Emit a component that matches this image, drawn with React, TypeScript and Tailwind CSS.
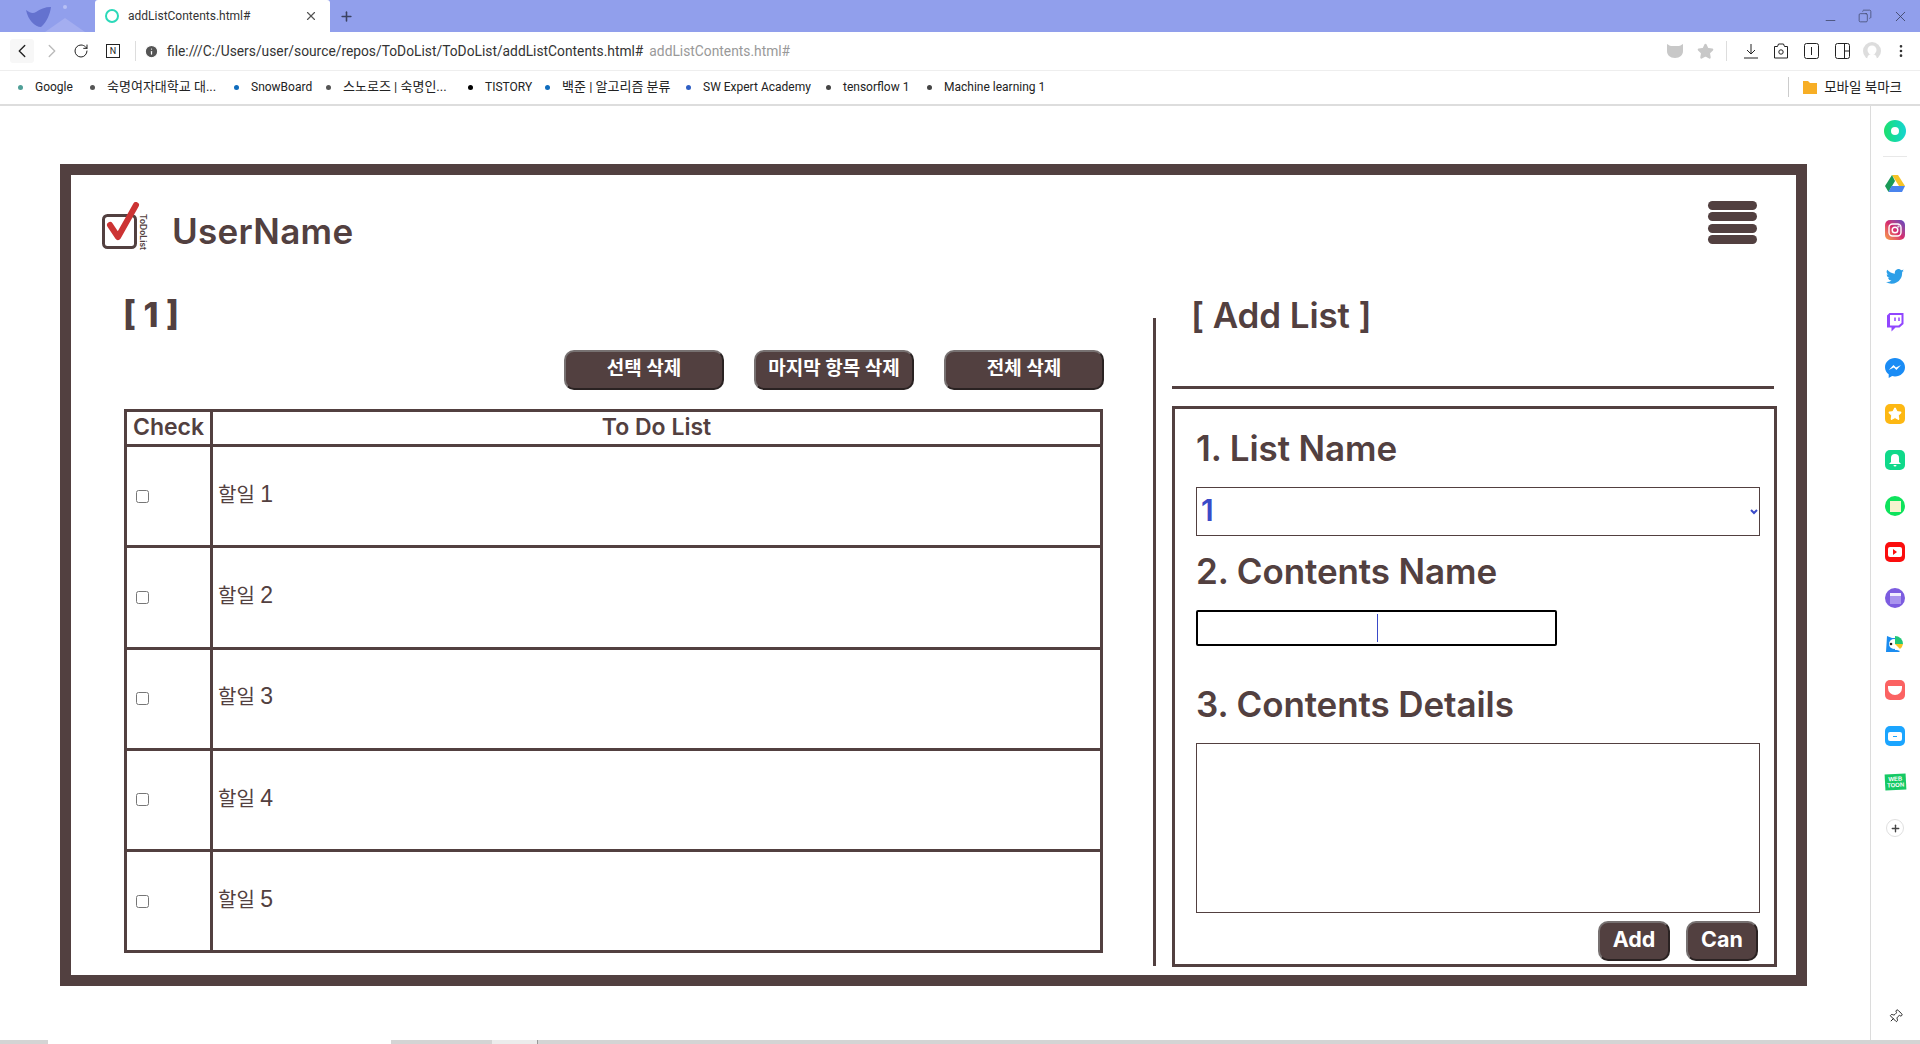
import React from 'react';
import { ChevronLeft, ChevronRight, RotateCw, Info, Star, X, Plus, Minus, Copy, MoreVertical, Pin } from 'lucide-react';

const bookmarks = [
  { label: 'Google', dot: 'bg-[#4f9f97]', width: 'w-[72px]', size: 'text-[12px]' },
  { label: '숙명여자대학교 대...', dot: 'bg-[#555555]', width: 'w-[144px]', size: 'text-[13px]' },
  { label: 'SnowBoard', dot: 'bg-[#0f6cbd]', width: 'w-[92px]', size: 'text-[12px]' },
  { label: '스노로즈 | 숙명인...', dot: 'bg-[#555555]', width: 'w-[142px]', size: 'text-[13px]' },
  { label: 'TISTORY', dot: 'bg-black', width: 'w-[77px]', size: 'text-[12px]' },
  { label: '백준 | 알고리즘 분류', dot: 'bg-[#0f6cbd]', width: 'w-[141px]', size: 'text-[13px]' },
  { label: 'SW Expert Academy', dot: 'bg-[#2f5fc4]', width: 'w-[140px]', size: 'text-[12px]' },
  { label: 'tensorflow 1', dot: 'bg-[#444444]', width: 'w-[101px]', size: 'text-[12px]' },
  { label: 'Machine learning 1', dot: 'bg-[#444444]', width: 'w-[130px]', size: 'text-[12px]' },
];

const todos = [1, 2, 3, 4, 5];

const headingFont = "font-['Inter','Noto_Sans_CJK_KR',sans-serif]";

const Tile: React.FC<{ className: string; children?: React.ReactNode }> = ({ className, children }) => (
  <div className={`flex h-[20px] w-[20px] items-center justify-center rounded-[5px] ${className}`}>{children}</div>
);

const SideItem: React.FC<{ children: React.ReactNode }> = ({ children }) => (
  <div className="flex h-[46px] w-full shrink-0 items-center justify-center">{children}</div>
);

const Sidebar = () => (
  <aside className="flex w-[50px] shrink-0 flex-col border-l border-[#dcdcdc] pt-[2px] pr-px pb-px">
    <SideItem>
      <div className="flex h-[22px] w-[22px] items-center justify-center rounded-full bg-gradient-to-r from-[#1fe06a] to-[#19d4d0]">
        <div className="h-[8px] w-[8px] rounded-full bg-white" />
      </div>
    </SideItem>
    <div className="mx-auto mt-[2px] mb-[4px] h-px w-[24px] bg-[#e8e8e8]" />
    <SideItem>
      <svg width="20" height="18" viewBox="0 0 20 18">
        <path d="M7 0h6l7 11h-6z" fill="#f7c325" />
        <path d="M7 0l3 6-6.500 11L0 11z" fill="#1a9a57" />
        <path d="M6.500 11H20l-3 6H3.500z" fill="#4a84ee" />
      </svg>
    </SideItem>
    <SideItem>
      <Tile className="bg-gradient-to-tr from-[#f9a03c] via-[#d6286e] to-[#5b3fc4]">
        <svg width="14" height="14" viewBox="0 0 14 14" fill="none" stroke="white" strokeWidth="1.400">
          <rect x="1" y="1" width="12" height="12" rx="3.500" />
          <circle cx="7" cy="7" r="2.800" />
          <circle cx="10.500" cy="3.500" r="0.400" />
        </svg>
      </Tile>
    </SideItem>
    <SideItem>
      <svg width="18" height="15" viewBox="0 0 24 20" fill="#2c9fe8">
        <path d="M24 2.400a10 10 0 0 1-2.800.8 5 5 0 0 0 2.200-2.700 10 10 0 0 1-3.100 1.200 4.900 4.900 0 0 0-8.400 4.500A14 14 0 0 1 1.700 1a4.900 4.900 0 0 0 1.500 6.600 4.900 4.900 0 0 1-2.200-.6 4.900 4.900 0 0 0 3.900 4.800 5 5 0 0 1-2.200.1 4.900 4.900 0 0 0 4.600 3.400A9.900 9.900 0 0 1 0 17.300 14 14 0 0 0 21.500 5v-.6A10 10 0 0 0 24 2.400z" />
      </svg>
    </SideItem>
    <SideItem>
      <svg width="18" height="20" viewBox="0 0 18 20">
        <path d="M1 3.500L3.500 1H17.500V12L13.500 15.500H9.500L5.500 19.500V15.500H1z" fill="#9146ff" />
        <path d="M4 3H15.500V11L12.500 13.500H4z" fill="white" />
        <path d="M9 5.500V9M13 5.500V9" stroke="#9146ff" strokeWidth="1.500" />
      </svg>
    </SideItem>
    <SideItem>
      <svg width="20" height="20" viewBox="0 0 20 20">
        <path d="M10 0C4.500 0 0 4.100 0 9.200c0 2.900 1.400 5.400 3.700 7V20l3.400-1.900c.9.300 1.900.4 2.900.4 5.500 0 10-4.100 10-9.300S15.500 0 10 0z" fill="#1a8cf5" />
        <path d="M3.800 12l4.700-5 2.500 2.500L16 7l-4.600 5-2.500-2.500z" fill="white" />
      </svg>
    </SideItem>
    <SideItem>
      <Tile className="bg-[#fdb813]">
        <Star size={14} fill="white" stroke="white" />
      </Tile>
    </SideItem>
    <SideItem>
      <Tile className="bg-[#10d98a]">
        <svg width="12" height="13" viewBox="0 0 12 13" fill="white">
          <path d="M6 0a4 4 0 0 1 4 4v4l2 2H0l2-2V4a4 4 0 0 1 4-4zM4.500 11h3a1.500 1.500 0 0 1-3 0z" />
        </svg>
      </Tile>
    </SideItem>
    <SideItem>
      <div className="flex h-[20px] w-[20px] items-center justify-center rounded-full bg-[#0ee35c]">
        <div className="h-[11px] w-[11px] bg-[#f6f3cf]" />
      </div>
    </SideItem>
    <SideItem>
      <Tile className="bg-[#fb0d0d]">
        <div className="flex h-[10px] w-[14px] items-center justify-center rounded-[2px] bg-white">
          <div className="h-0 w-0 border-y-[3px] border-l-[4px] border-y-transparent border-l-[#fb0d0d]" />
        </div>
      </Tile>
    </SideItem>
    <SideItem>
      <div className="flex h-[20px] w-[20px] items-center justify-center rounded-full bg-[#7c5ce0]">
        <div className="flex h-[11px] w-[11px] items-end justify-center border-t-[3px] border-[#f0ecff] bg-[#a994ee]" />
      </div>
    </SideItem>
    <SideItem>
      <svg width="20" height="18" viewBox="0 0 20 18">
        <path d="M2 1l5 2h3v14H1z" fill="#1a8cf0" />
        <circle cx="9" cy="9" r="5" fill="white" />
        <path d="M10 1a8 8 0 0 1 8 8h-8z" fill="#21c776" />
        <path d="M10 9h8a8 8 0 0 1-3 5z" fill="#f7c325" />
        <path d="M4 15h8l3 1-1 1H4z" fill="#1a8cf0" />
        <circle cx="6" cy="9" r="1.300" fill="#222222" />
      </svg>
    </SideItem>
    <SideItem>
      <Tile className="bg-[#fb6262]">
        <svg width="14" height="9" viewBox="0 0 14 9">
          <path d="M0 0h14v2a7 7 0 0 1-14 0z" fill="white" />
        </svg>
      </Tile>
    </SideItem>
    <SideItem>
      <Tile className="bg-[#1ba5ff]">
        <div className="flex h-[9px] w-[14px] items-center justify-center rounded-[2px] bg-white">
          <div className="h-px w-[4px] bg-[#1ba5ff]" />
        </div>
      </Tile>
    </SideItem>
    <SideItem>
      <div className="flex h-[16px] w-[21px] -rotate-3 flex-col items-center justify-center bg-[#16c964] font-['Liberation_Sans',sans-serif] text-[6px] leading-[6px] font-bold text-white">
        <span>WEB</span>
        <span>TOON</span>
      </div>
    </SideItem>
    <SideItem>
      <div className="flex h-[18px] w-[18px] items-center justify-center rounded-full border border-[#e0e0e0]">
        <Plus size={11} strokeWidth={3} className="text-[#444444]" />
      </div>
    </SideItem>
    <div className="mt-auto">
      <SideItem>
        <Pin size={15} strokeWidth={1.500} className="rotate-45 text-[#222222]" />
      </SideItem>
    </div>
  </aside>
);

const Chrome = () => (
  <div className="shrink-0 font-['Roboto','Noto_Sans_CJK_KR',sans-serif]">
    <div className="relative flex h-[32px] overflow-hidden bg-[#919fec]">
      <div className="relative h-[32px] w-[95px] shrink-0 overflow-hidden">
        <svg width="95" height="32" viewBox="0 0 95 32">
          <path d="M26 10c4 3 7 4 10 2 4-3 9-5 15-5-1 7-4 15-10 20-6 0-13-7-15-17z" fill="#6472cf" />
          <path d="M45 32l20-14 20 14z" fill="#a4aef0" />
          <circle cx="65" cy="7" r="2" fill="#b7c0f5" />
        </svg>
      </div>
      <div className="flex h-[32px] w-[235px] shrink-0 items-center rounded-t-[3px] bg-white pl-[10px]">
        <div className="h-[14px] w-[14px] rounded-full border-2 border-[#2bd9b9]" />
        <span className="ml-[9px] w-[176px] text-[12px] text-[#333333]">addListContents.html#</span>
        <X size={14} className="text-[#555555]" />
      </div>
      <Plus size={15} strokeWidth={2.500} className="ml-[9px] self-center text-[#3b4261]" />
      <div className="ml-auto flex items-center gap-[20px] pr-[11px] text-[#3b4261]">
        <Minus size={15} strokeWidth={1.200} className="mt-[8px]" />
        <Copy size={14} strokeWidth={1.200} className="-scale-x-100" />
        <X size={17} strokeWidth={1.200} />
      </div>
    </div>

    <div className="flex h-[39px] items-center border-b border-[#eeeeee] bg-white pl-[10px] text-[#222222]">
      <div className="flex h-[24px] w-[24px] items-center justify-center rounded-[3px] bg-[#f7f7f7]">
        <ChevronLeft size={22} strokeWidth={1.500} />
      </div>
      <ChevronRight size={22} strokeWidth={1.500} className="ml-[7px] text-[#bbbbbb]" />
      <RotateCw size={16} strokeWidth={1.500} className="ml-[10px]" />
      <div className="ml-[17px] flex h-[14px] w-[14px] items-center justify-center border border-[#222222] text-[9px] leading-none">N</div>
      <div className="ml-[15px] h-[20px] w-px bg-[#dddddd]" />
      <Info size={15} fill="#555555" stroke="white" className="ml-[8px]" />
      <span className="ml-[8px] text-[13.800px] whitespace-nowrap text-[#333333]">file:///C:/Users/user/source/repos/ToDoList/ToDoList/addListContents.html#</span>
      <span className="ml-[6px] text-[13.800px] text-[#999999]">addListContents.html#</span>
      <div className="ml-auto flex items-center pr-[11px]">
        <svg width="16" height="16" viewBox="0 0 16 16" className="mr-[14px]">
          <path d="M0 1c2 1 3 2 4 2h8c1 0 2-1 4-2v7c0 4-3 7-8 7s-8-3-8-7z" fill="#c8c8c8" />
        </svg>
        <Star size={17} fill="#c8c8c8" stroke="#c8c8c8" className="mr-[12px]" />
        <div className="mr-[17px] h-[20px] w-px bg-[#dddddd]" />
        <svg width="14" height="16" viewBox="0 0 14 16" fill="none" stroke="#222222" className="mr-[15px]">
          <path d="M7 1v10M3 7l4 4 4-4M0 15h14" />
        </svg>
        <svg width="16" height="16" viewBox="0 0 16 16" fill="none" stroke="#222222" className="mr-[15px]">
          <path d="M1.500 3.500H4.500L5.500 1H10.500L11.500 3.500H14.500V15H1.500z" strokeLinejoin="round" />
          <circle cx="8" cy="9" r="2.200" />
        </svg>
        <svg width="15" height="16" viewBox="0 0 15 16" fill="none" stroke="#222222" className="mr-[16px]">
          <rect x="0.500" y="0.500" width="14" height="15" rx="2" />
          <path d="M7.500 4v8" />
        </svg>
        <svg width="15" height="16" viewBox="0 0 15 16" fill="none" stroke="#222222" className="mr-[13px]">
          <rect x="0.500" y="0.500" width="14" height="15" rx="2" />
          <path d="M9.500 1v14M9.500 8h5" />
        </svg>
        <svg width="18" height="18" viewBox="0 0 18 18" className="mr-[12px]">
          <circle cx="9" cy="9" r="9" fill="#dddddd" />
          <circle cx="9" cy="8" r="4.500" fill="white" />
          <path d="M4 18c0-4 2-6 5-6s5 2 5 6z" fill="white" />
        </svg>
        <MoreVertical size={16} strokeWidth={2} className="text-[#333333]" />
      </div>
    </div>

    <div className="flex h-[35px] items-center border-b-2 border-[#dddddd] bg-white pb-[1px] pl-[18px]">
      {bookmarks.map((b) => (
        <div key={b.label} className={`flex items-center ${b.width}`}>
          <span className={`h-[5px] w-[5px] shrink-0 rounded-full ${b.dot}`} />
          <span className={`ml-[12px] whitespace-nowrap text-[#222222] ${b.size}`}>{b.label}</span>
        </div>
      ))}
      <div className="ml-auto flex items-center pr-[18px]">
        <div className="mr-[14px] h-[20px] w-px bg-[#cccccc]" />
        <svg width="14" height="13" viewBox="0 0 14 13" className="mr-[7px]">
          <path d="M0 0h5l2 2h7v11H0z" fill="#f7ae25" />
        </svg>
        <span className="text-[13.500px] text-[#222222]">모바일 북마크</span>
      </div>
    </div>
  </div>
);

const DarkButton: React.FC<{ label: string; className: string }> = ({ label, className }) => (
  <button className={`rounded-[10px] border-2 border-t-[#777171] border-r-[#2a2222] border-b-[#2a2222] border-l-[#777171] bg-[#524040] font-bold whitespace-nowrap text-white ${className}`}>
    {label}
  </button>
);

const SectionTitle: React.FC<{ children: React.ReactNode; className: string }> = ({ children, className }) => (
  <h2 className={`text-[35px] leading-[42px] font-semibold tracking-[-0.1px] text-[#524040] ${className}`}>{children}</h2>
);

const App = () => {
  return (
    <div className="flex h-screen w-full flex-col overflow-hidden bg-white">
      <Chrome />
      <div className="flex min-h-0 flex-1">
        <main className={`min-w-0 flex-1 pt-[58px] pl-[60px] ${headingFont}`}>
          <div className="h-[822px] w-[1747px] border-[11px] border-[#524040] bg-white">
            <header className="flex h-[120px] items-start justify-between pr-[39px] pl-[31px]">
              <div className="mt-[27px] flex items-center">
                <div className="relative h-[50px] w-[46px] shrink-0">
                  <svg width="46" height="50" viewBox="0 0 46 50">
                    <rect x="1.500" y="13.500" width="32" height="32" rx="4" fill="none" stroke="#524040" strokeWidth="3" />
                    <path d="M8 23l8 12L34 3" fill="none" stroke="#cc3333" strokeWidth="6" strokeLinecap="round" strokeLinejoin="round" />
                  </svg>
                  <span className="absolute top-[30px] left-[41px] -translate-x-1/2 -translate-y-1/2 rotate-90 text-[8.500px] leading-none font-semibold whitespace-nowrap text-[#524040]">ToDoList</span>
                </div>
                <h1 className="mt-[8px] ml-[24px] text-[35px] leading-[42px] font-semibold tracking-[0.3px] text-[#524040]">UserName</h1>
              </div>
              <div className="mt-[26px] flex w-[49px] flex-col">
                <div className="h-[9px] rounded-full bg-[#524040]" />
                <div className="mt-[2px] h-[9px] rounded-full bg-[#524040]" />
                <div className="mt-[3px] h-[9px] rounded-full bg-[#524040]" />
                <div className="mt-[2px] h-[9px] rounded-full bg-[#524040]" />
              </div>
            </header>

            <div className="flex">
              <section className="w-[1082px] shrink-0 pl-[53px]">
                <h2 className="-ml-[1px] h-[55px] text-[34px] leading-[40px] font-extrabold text-[#524040]">[ 1 ]</h2>
                <div className="flex w-[980px] justify-end gap-[30px]">
                  <DarkButton label="선택 삭제" className="h-[40px] w-[160px] pb-[1px] text-[19px]" />
                  <DarkButton label="마지막 항목 삭제" className="h-[40px] w-[160px] pb-[1px] text-[19px]" />
                  <DarkButton label="전체 삭제" className="h-[40px] w-[160px] pb-[1px] text-[19px]" />
                </div>
                <table className="mt-[19px] w-[979px] table-fixed border-collapse border-3 border-[#524040] text-[#524040]">
                  <thead>
                    <tr className="h-[35px]">
                      <th className="w-[86px] border-3 border-[#524040] p-0 pb-[2px] text-[23px] leading-none font-semibold">Check</th>
                      <th className="border-3 border-[#524040] p-0 pb-[2px] text-[23px] leading-none font-semibold">To Do List</th>
                    </tr>
                  </thead>
                  <tbody>
                    {todos.map((n) => (
                      <tr key={n} className="h-[101.250px]">
                        <td className="border-3 border-[#524040] pl-[9px]">
                          <input type="checkbox" className="block h-[13px] w-[13px]" />
                        </td>
                        <td className="border-3 border-[#524040] pb-[4px] pl-[5px] font-['Liberation_Sans','Noto_Sans_CJK_KR',sans-serif] text-[20px]">
                          할일 <span className="text-[23px]">{n}</span>
                        </td>
                      </tr>
                    ))}
                  </tbody>
                </table>
              </section>

              <div className="mt-[23px] h-[648px] w-[3px] shrink-0 bg-[#524040]" />

              <section className="ml-[16px] w-[605px] shrink-0">
                <SectionTitle className="-mt-[1px] ml-[19px] h-[92px]">[ Add List ]</SectionTitle>
                <div className="h-[3px] w-[602px] bg-[#524040]" />
                <div className="mt-[17px] h-[561px] border-3 border-[#524040] pl-[21px]">
                  <SectionTitle className="mt-[18px] h-[60px]">1. List Name</SectionTitle>
                  <div className="relative h-[49px] w-[564px]">
                    <select className="h-full w-full appearance-none border border-[#524040] bg-white pb-[2px] pl-[4px] text-[30px] font-semibold text-[#3a4ac8]">
                      <option>1</option>
                    </select>
                    <svg width="8" height="6" viewBox="0 0 8 6" fill="none" stroke="#3a4ac8" strokeWidth="2" className="absolute top-[22px] right-[2px]">
                      <path d="M1 1l3 3 3-3" />
                    </svg>
                  </div>
                  <SectionTitle className="mt-[14px] h-[60px]">2. Contents Name</SectionTitle>
                  <div className="relative h-[36px] w-[361px]">
                    <input type="text" className="h-full w-full rounded-[2px] border-2 border-black bg-white" />
                    <div className="absolute top-[4px] left-[181px] h-[28px] w-px bg-[#3a4ac8]" />
                  </div>
                  <SectionTitle className="mt-[37px] h-[60px]">3. Contents Details</SectionTitle>
                  <textarea className="block h-[170px] w-[564px] resize-none border border-[#524040] bg-white" />
                  <div className="mt-[8px] flex w-[562px] justify-end gap-[16px]">
                    <DarkButton label="Add" className="h-[40px] w-[72px] pb-[3px] text-[21.500px]" />
                    <DarkButton label="Can" className="h-[40px] w-[72px] pb-[3px] text-[21.500px]" />
                  </div>
                </div>
              </section>
            </div>
          </div>
        </main>
        <Sidebar />
      </div>
      <div className="flex h-[4px] shrink-0 bg-[#d4d4d4]">
        <div className="ml-[48px] h-full w-[343px] bg-white" />
        <div className="ml-[101px] h-full w-[45px] bg-[#ececec]" />
        <div className="h-full w-px bg-[#999999]" />
      </div>
    </div>
  );
};

export default App;
